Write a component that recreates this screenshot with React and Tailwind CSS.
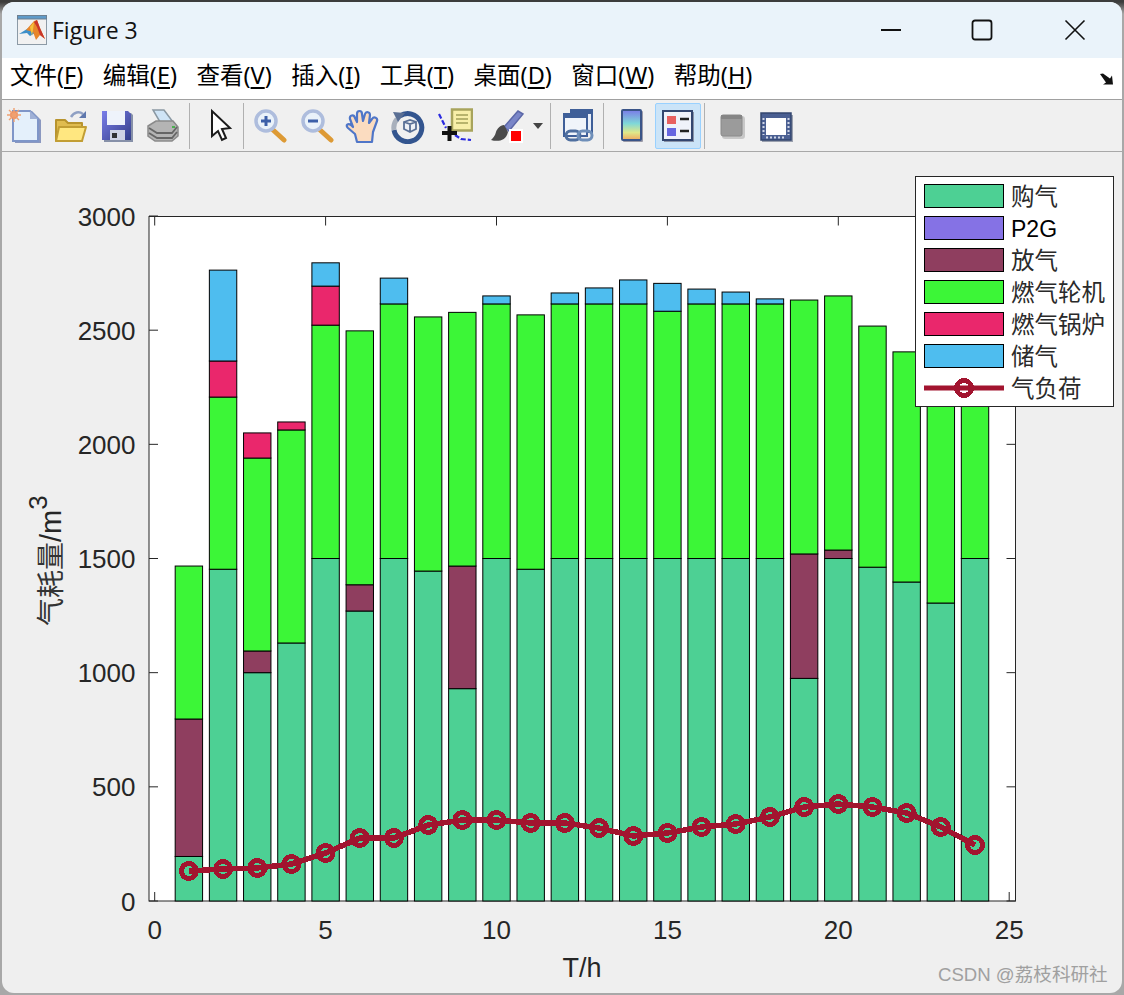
import React from "react";

const X = (t) => 154.7 + 34.18 * t;
const Y = (v) => 901 - v * 0.22833;

const buy = [195,1453,1000,1130,1500,1270,1500,1445,930,1500,1453,1500,1500,1500,1500,1500,1500,1500,975,1500,1462,1397,1305,1500];
const rel = [797,0,1095,0,0,1385,0,0,1467,0,0,0,0,0,0,0,0,0,1520,1537,0,0,0,0];
const gt = [1467,2207,1940,2063,2522,2497,2615,2558,2578,2615,2567,2615,2615,2615,2583,2615,2615,2615,2632,2650,2518,2405,2600,2600];
const boil = [0,2365,2050,2098,2693,0,0,0,0,0,0,0,0,0,0,0,0,0,0,0,0,0,0,0];
const store = [0,2763,0,0,2795,0,2728,0,0,2650,0,2663,2685,2720,2705,2680,2667,2637,0,0,0,0,0,0];
const loadPx = [871,869,868,864,853,838,838,825,820,820,823,823,828,836,833,827,824,817,807,804,807,813,827,845];

const C = { buy: "#4DD094", p2g: "#8572E5", rel: "#8F3E5F", gt: "#3CF637", boil: "#EA276C", store: "#4EBDEF", load: "#A2142F" };
const AXIS = "#262626";
const TICK_FONT = { fontFamily: "'Liberation Sans', Arial, sans-serif" };
const CJK = "'Noto Sans CJK SC', 'Liberation Sans', sans-serif";

function Chart() {
  const bars = [];
  buy.forEach((b, i) => {
    const t = i + 1;
    const x = X(t) - 13.7;
    const seg = [[0, b, C.buy]];
    let prev = b;
    [[rel[i], C.rel], [gt[i], C.gt], [boil[i], C.boil], [store[i], C.store]].forEach(([v, col]) => {
      if (v > 0) { seg.push([prev, v, col]); prev = v; }
    });
    seg.forEach(([a, c, col], k) => (
      bars.push(<rect key={`${i}-${k}`} x={x} y={Y(c)} width={27.4} height={Y(a) - Y(c)} fill={col} stroke="#000" strokeWidth="1" />)
    ));
  });
  const pts = loadPx.map((y, i) => `${X(i + 1)},${y}`).join(" ");
  return (
    <svg viewBox="2 152 1120 841" width="1120" height="841" className="block">
      <rect x="149" y="216.5" width="866.5" height="684.5" fill="#fff" />
      {[0, 5, 10, 15, 20, 25].map((t) => (
        <g key={t}>
          <path d={`M${X(t)} 901v-9M${X(t)} 216.5v9`} stroke={AXIS} strokeWidth="1" />
          <text x={X(t)} y="939" textAnchor="middle" fontSize="26" fill={AXIS} style={TICK_FONT}>{t}</text>
        </g>
      ))}
      {[0, 500, 1000, 1500, 2000, 2500, 3000].map((v) => (
        <g key={v}>
          <path d={`M149 ${Y(v)}h9M1015.5 ${Y(v)}h-9`} stroke={AXIS} strokeWidth="1" />
          <text x="135.500" y={Y(v) + 9.5} textAnchor="end" fontSize="26" fill={AXIS} style={TICK_FONT}>{v}</text>
        </g>
      ))}
      <rect x="149" y="216.5" width="866.5" height="684.5" fill="none" stroke={AXIS} strokeWidth="1" />
      {bars}
      <polyline points={pts} fill="none" stroke={C.load} strokeWidth="5.5" shapeRendering="crispEdges" />
      {loadPx.map((y, i) => (
        <circle key={i} cx={X(i + 1)} cy={y} r="7.5" fill="none" stroke={C.load} strokeWidth="5" shapeRendering="crispEdges" />
      ))}
      <text x="582" y="977" textAnchor="middle" fontSize="27" fill={AXIS} style={TICK_FONT}>T/h</text>
      <text transform="translate(61 626) rotate(-90)" fontSize="28" fill="#333" style={{ fontFamily: CJK }}>
        气耗量<tspan fontSize="29" fill={AXIS} style={TICK_FONT}>/m</tspan><tspan dy="-14" fontSize="26" fill={AXIS} style={TICK_FONT}>3</tspan>
      </text>
      <text x="938" y="981" fontSize="18.6" fill="#a0a0a0" style={{ fontFamily: "'Liberation Sans', 'Noto Sans CJK SC', sans-serif" }}>CSDN @荔枝科研社</text>
    </svg>
  );
}

function Swatch({ c }) {
  return <span className="block w-[80px] h-[24px] border border-black shrink-0" style={{ backgroundColor: c }} />;
}

const legendRows = [
  ["购气", C.buy], ["P2G", C.p2g], ["放气", C.rel], ["燃气轮机", C.gt], ["燃气锅炉", C.boil], ["储气", C.store],
];

function Legend() {
  return (
    <div className="absolute left-[913px] top-[24px] w-[199px] h-[231px] bg-white border border-[#262626] pt-[3px] pl-[8px] flex flex-col font-['Noto_Sans_CJK_SC','Liberation_Sans',sans-serif]">
      {legendRows.map(([t, c]) => (
        <div key={t} className="flex items-center h-[32px] gap-[7px]">
          <Swatch c={c} />
          <span className={t === "P2G" ? "text-[23px] leading-none text-black pt-[3px] font-['Liberation_Sans',sans-serif]" : "text-[23.5px] leading-none text-[#2a2a2a]"}>{t}</span>
        </div>
      ))}
      <div className="flex items-center h-[32px] gap-[7px]">
        <svg width="80" height="24" viewBox="0 0 80 24" className="shrink-0">
          <path d="M0 12h80" stroke={C.load} strokeWidth="5" />
          <circle cx="40" cy="12" r="7.5" fill="none" stroke={C.load} strokeWidth="5" shapeRendering="crispEdges" />
        </svg>
        <span className="text-[23.5px] leading-none text-[#2a2a2a]">气负荷</span>
      </div>
    </div>
  );
}

function MatlabIcon() {
  return (
    <svg width="32" height="32" viewBox="0 0 32 32">
      <rect x="1.5" y="1.5" width="29" height="29" fill="#f1f1f1" stroke="#8c9aa6" />
      <rect x="1.5" y="1.5" width="29" height="3.500" fill="#5f9ac8" stroke="#6d7f90" />
      <path d="M3 20l8-5 4-3 4 7-5 3-3-3z" fill="#3d8fc8" />
      <path d="M10 16L18 7l3-1 3 8 5 11-5-4-4 5-3-8z" fill="#e8862a" />
      <path d="M18 8l3-2 3 8 5 11-5-4-3-8z" fill="#c9372a" />
      <path d="M14 13l4-5-1 8-1 6z" fill="#f5c23c" />
    </svg>
  );
}

const Ic = ({ children }) => <svg width="36" height="36" viewBox="0 0 36 36">{children}</svg>;

const icons = {
  new: (
    <Ic>
      <path d="M8 3h17l9 9v23H8z" fill="#8b98c0" />
      <path d="M6 3h17l8 8v22H6z" fill="#e4f0fb" stroke="#7f96c8" strokeWidth="2" />
      <path d="M23 3v8h8z" fill="#9fb0d6" />
      <circle cx="7" cy="7" r="4" fill="#ee8a5a" />
      <path d="M7 0v14M0 7h14M2 2l10 10M12 2L2 12" stroke="#f0a070" strokeWidth="1.4" />
    </Ic>
  ),
  open: (
    <Ic>
      <path d="M18 9c3-5 8-6 12-3" fill="none" stroke="#8fa0c4" strokeWidth="2.5" />
      <path d="M33 3v7h-7z" fill="#5f78ad" />
      <path d="M3 12h9l3 3h14v18H3z" fill="#e0bc50" stroke="#b8942e" strokeWidth="2" strokeLinejoin="round" />
      <path d="M3 33l3-14h27l-4 14z" fill="#ffe780" stroke="#c29e34" strokeWidth="2" strokeLinejoin="round" />
    </Ic>
  ),
  save: (
    <Ic>
      <defs>
        <linearGradient id="sv" x1="0" y1="0" x2="1" y2="1">
          <stop offset="0" stopColor="#7a7eea" />
          <stop offset="1" stopColor="#343f88" />
        </linearGradient>
      </defs>
      <path d="M5 5h27l2 2v27H5z" fill="#8690a8" />
      <path d="M3 3h26l3 3v26H3z" fill="url(#sv)" />
      <rect x="8" y="3" width="18" height="14" fill="#eef3fb" />
      <rect x="11" y="22" width="15" height="10" fill="#d0d4e4" />
      <rect x="13" y="25" width="5" height="5" fill="#333" />
    </Ic>
  ),
  print: (
    <Ic>
      <path d="M8 2h11l9 12H15z" fill="#cfe4f6" stroke="#8a98a2" strokeWidth="1.5" />
      <path d="M3 18l8-5h17l5 6v9l-6 5H10l-7-5z" fill="#b4b4b4" stroke="#8a8a8a" strokeWidth="1.5" />
      <path d="M4 20l8 5h15l5-6M4 25l8 5h15l5-6" fill="none" stroke="#666" strokeWidth="1.8" />
      <rect x="27" y="18" width="3" height="2" fill="#4caf50" />
    </Ic>
  ),
  cursor: (
    <Ic>
      <path d="M11 3v25l6-5 4 9 4-2-4-9 8-1z" fill="#fff" stroke="#1c1c1c" strokeWidth="2" strokeLinejoin="miter" />
    </Ic>
  ),
  zoomIn: (
    <Ic>
      <path d="M20 21l12 11" stroke="#dd9a35" strokeWidth="5" strokeLinecap="round" />
      <circle cx="14" cy="13" r="10" fill="#eaf2fa" stroke="#aebddd" strokeWidth="3.500" />
      <path d="M9 13h10M14 8v10" stroke="#3c5fa8" strokeWidth="3" />
    </Ic>
  ),
  zoomOut: (
    <Ic>
      <path d="M20 21l12 11" stroke="#dd9a35" strokeWidth="5" strokeLinecap="round" />
      <circle cx="14" cy="13" r="10" fill="#eaf2fa" stroke="#aebddd" strokeWidth="3.500" />
      <path d="M9 13h10" stroke="#3c5fa8" strokeWidth="3" />
    </Ic>
  ),
  hand: (
    <Ic>
      <path d="M12 34l-2-8-7-6c-3-3 0-5 3-3l2 2-3-8c-1-4 4-5 5-1l2 4 0-8c0-4 5-4 5 0l1 7 2-7c1-3 5-2 5 1l-1 8 3-4c2-3 6-1 5 2l-4 11-1 10z" fill="#fbdcc0" stroke="#4f76c8" strokeWidth="2.2" strokeLinejoin="round" />
    </Ic>
  ),
  rotate: (
    <Ic>
      <path d="M9 8a14 14 0 1 1 -6 14" fill="none" stroke="#33558f" strokeWidth="5" />
      <path d="M3 22a14 14 0 0 1 3-11" fill="none" stroke="#a8b0bc" strokeWidth="5" />
      <path d="M2 4l12 1-7 9z" fill="#5a6f94" />
      <path d="M13 14l6-2 6 2v7l-6 3-6-3zM13 14l6 2 6-2M19 16v8" fill="#eef1f6" stroke="#5a7096" strokeWidth="1.8" />
    </Ic>
  ),
  tip: (
    <Ic>
      <rect x="15" y="1.500" width="20" height="21" fill="#f8efa8" stroke="#a8a45c" strokeWidth="2.5" />
      <path d="M19 7h12M19 11h12M19 15h12" stroke="#b8b46c" strokeWidth="2" />
      <path d="M2 6l7 14M18 27l6 4 10 1" fill="none" stroke="#2a2ae0" strokeWidth="2.2" strokeDasharray="5 2" />
      <path d="M5 25h15M12.500 18v15" stroke="#111" strokeWidth="4" />
    </Ic>
  ),
  brush: (
    <Ic>
      <path d="M15 19L29 3l5 3-14 17z" fill="#7a86c8" stroke="#5c68a8" strokeWidth="1.5" />
      <path d="M15 17c-4 0-7 4-8 7-1 4-3 6-5 8 7 2 15 1 17-8z" fill="#4a4a4a" />
      <rect x="20" y="21" width="14" height="14" fill="#fff" />
      <rect x="22" y="23" width="10" height="10" fill="#f00" />
    </Ic>
  ),
  caret: (
    <svg width="12" height="8" viewBox="0 0 12 8"><path d="M1 1h10L6 7z" fill="#444" /></svg>
  ),
  link: (
    <Ic>
      <rect x="11" y="2" width="21" height="22" fill="#e8eef8" stroke="#3f5f98" strokeWidth="2" />
      <path d="M11 2h21v4H11z" fill="#3f5f98" />
      <rect x="4" y="6" width="23" height="22" fill="#f0f4fa" stroke="#3f5f98" strokeWidth="2" />
      <path d="M4 6h23v4H4z" fill="#3f5f98" />
      <rect x="6" y="23" width="14" height="9" rx="4.5" fill="none" stroke="#4f6f9f" strokeWidth="3" />
      <rect x="18" y="23" width="14" height="9" rx="4.5" fill="none" stroke="#6f8fb9" strokeWidth="3" />
    </Ic>
  ),
  colorbar: (
    <Ic>
      <defs>
        <linearGradient id="cb" x1="0" y1="0" x2="0" y2="1">
          <stop offset="0" stopColor="#7a7ae8" />
          <stop offset="0.45" stopColor="#7fd8d8" />
          <stop offset="0.75" stopColor="#dfe88a" />
          <stop offset="1" stopColor="#f0a860" />
        </linearGradient>
      </defs>
      <rect x="9" y="3" width="20" height="31" fill="#9a9aa8" rx="1" />
      <rect x="8" y="2" width="19" height="30" fill="url(#cb)" stroke="#3a5488" strokeWidth="2" rx="1" />
    </Ic>
  ),
  legend: (
    <Ic>
      <rect x="4" y="4" width="30" height="30" fill="#8a94a8" />
      <rect x="3" y="3" width="29" height="29" fill="#eff2fa" stroke="#33466f" strokeWidth="2" />
      <rect x="7" y="8" width="9" height="8" fill="#e86060" />
      <rect x="7" y="20" width="9" height="8" fill="#6666e0" />
      <path d="M20 11h9M20 23h9" stroke="#222" strokeWidth="2.5" />
    </Ic>
  ),
  hide: (
    <Ic>
      <rect x="8" y="8" width="23" height="23" rx="3" fill="#c8c8c8" />
      <rect x="7" y="7" width="21" height="21" rx="2" fill="#9b9b9b" stroke="#8a8a8a" />
      <rect x="7" y="7" width="21" height="4" fill="#858585" />
    </Ic>
  ),
  plot: (
    <Ic>
      <rect x="4" y="7" width="31" height="27" fill="#9aa0ae" />
      <rect x="3" y="5" width="30" height="27" fill="#4a5f92" stroke="#33466f" strokeWidth="1.5" />
      <rect x="8" y="10" width="20" height="17" fill="#fff" />
      <path d="M5.500 10v17M30.500 10v17" stroke="#cfd6e6" strokeWidth="2" strokeDasharray="2 2" />
      <path d="M8 29.500h20" stroke="#cfd6e6" strokeWidth="2" strokeDasharray="2 2" />
    </Ic>
  ),
};

function Btn({ name, w = "w-[46px]", extra = "" }) {
  return <div className={`${w} h-[46px] flex items-center justify-center shrink-0 blur-[0.4px] ${extra}`}>{icons[name]}</div>;
}
function Sep({ ml }) {
  return <div className={`w-[2px] h-[46px] shrink-0 border-l border-[#b0b0b0] ${ml}`} />;
}

const menus = [["文件", "F"], ["编辑", "E"], ["查看", "V"], ["插入", "I"], ["工具", "T"], ["桌面", "D"], ["窗口", "W"], ["帮助", "H"]];

export default function App() {
  return (
    <div className="w-[1124px] h-[995px] flex flex-col overflow-hidden bg-[linear-gradient(#3c3c3c_0,#3c3c3c_2px,#a8a8a8_14px,#a8a8a8_100%)] px-[2px] pt-[2px] pb-[2px]">
      <div className="flex-1 flex flex-col rounded-[12px] overflow-hidden bg-[#efefef]">
        <div className="h-[56px] bg-[#eaf3fa] flex items-center shrink-0">
          <div className="ml-[14px]"><MatlabIcon /></div>
          <span className="ml-[4px] text-[23px] text-[#111] font-['Open_Sans','Noto_Sans',sans-serif]">Figure 3</span>
          <div className="ml-auto flex items-center">
            <svg width="22" height="22" viewBox="0 0 22 22" className="mr-[69px]"><path d="M1 11h20" stroke="#111" strokeWidth="1.8" /></svg>
            <svg width="22" height="22" viewBox="0 0 22 22" className="mr-[71px]"><rect x="1.500" y="1.500" width="19" height="19" rx="2.500" fill="none" stroke="#111" strokeWidth="1.8" /></svg>
            <svg width="22" height="22" viewBox="0 0 22 22" className="mr-[36px]"><path d="M1.500 1.500l19 19M20.500 1.500l-19 19" stroke="#111" strokeWidth="1.6" /></svg>
          </div>
        </div>
        <div className="h-[42px] bg-white border-b border-[#a0a0a0] flex items-center pl-[8px] pb-[5px] gap-[19.5px] shrink-0">
          {menus.map(([t, k]) => (
            <span key={k} className="text-[23.5px] text-black leading-none whitespace-nowrap font-['Noto_Sans','Noto_Sans_CJK_SC',sans-serif]">
              {t}(<span className="underline underline-offset-[3px]">{k}</span>)
            </span>
          ))}
          <svg width="16" height="12" viewBox="0 0 16 12" className="ml-auto mr-[7px] mt-[5px]"><path d="M1 1l3-0.500 7 5 2-3 1 9H4l3-2z" fill="#111" /></svg>
        </div>
        <div className="h-[52px] bg-[#f0f0f0] border-b border-[#a8a8a8] flex items-center shrink-0">
          <Btn name="new" />
          <Btn name="open" />
          <Btn name="save" />
          <Btn name="print" />
          <Sep ml="ml-[3px]" />
          <Btn name="cursor" w="w-[48px]" extra="ml-[4px]" />
          <Sep ml="" />
          <Btn name="zoomIn" extra="ml-[2px]" />
          <Btn name="zoomOut" extra="ml-[1px]" />
          <Btn name="hand" />
          <Btn name="rotate" />
          <Btn name="tip" />
          <Btn name="brush" extra="ml-[6px]" />
          <Btn name="caret" w="w-[16px]" />
          <Sep ml="ml-[4px]" />
          <Btn name="link" extra="ml-[3px]" />
          <Sep ml="ml-[2px]" />
          <Btn name="colorbar" extra="ml-[4px]" />
          <div className="w-[46px] h-[46px] shrink-0 flex items-center justify-center bg-[#cbe4f8] border border-[#99d1ff] rounded-[2px]"><div className="blur-[0.4px]">{icons.legend}</div></div>
          <Sep ml="ml-[3px]" />
          <Btn name="hide" w="w-[44px]" extra="ml-[4px]" />
          <Btn name="plot" w="w-[44px]" />
        </div>
        <div className="flex-1 relative">
          <Chart />
          <Legend />
        </div>
      </div>
    </div>
  );
}
